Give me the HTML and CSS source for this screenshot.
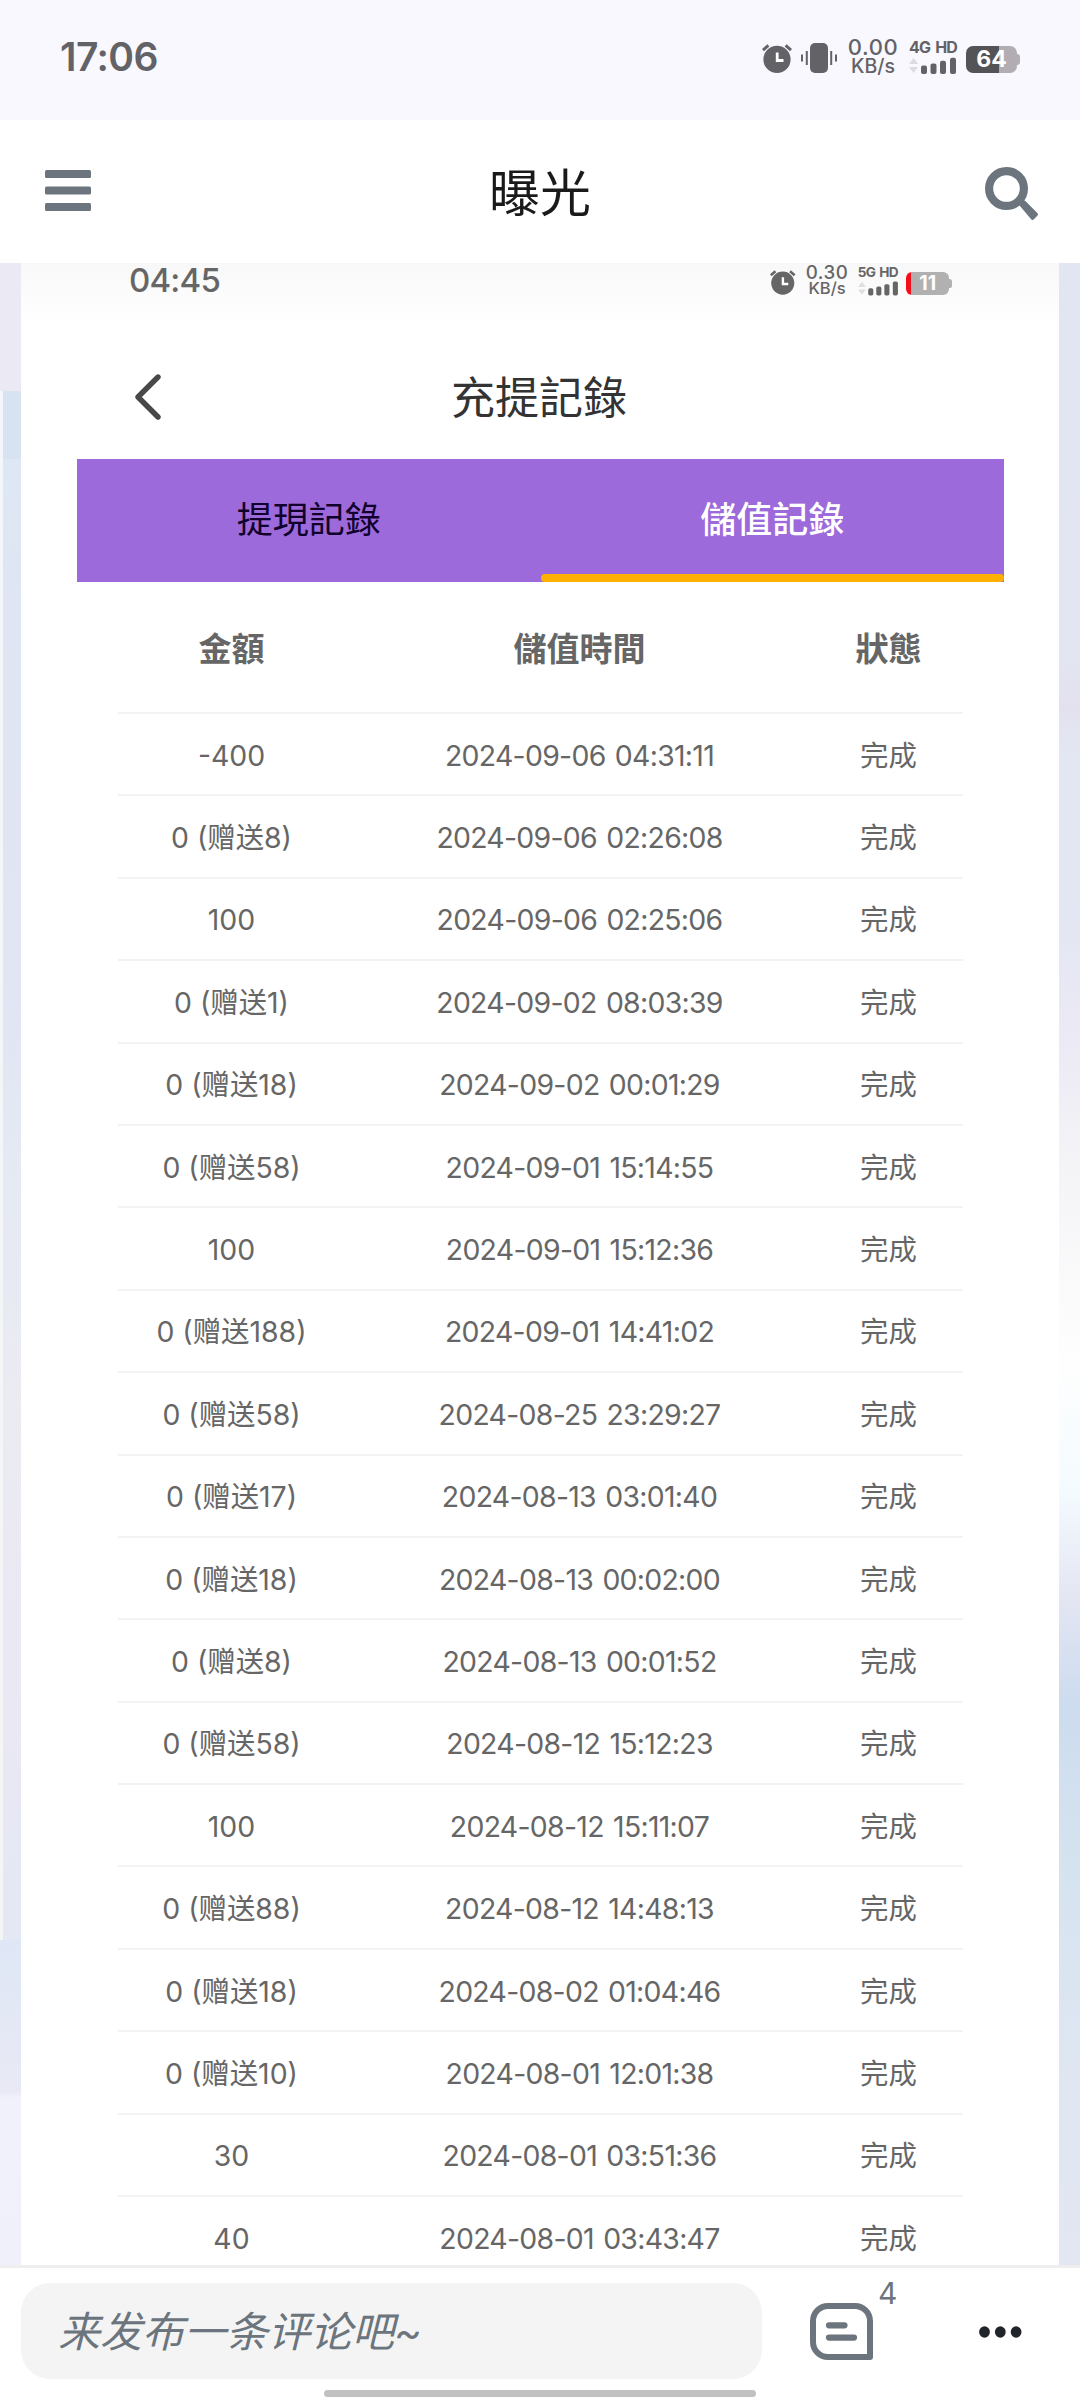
FILE: index.html
```
<!DOCTYPE html>
<html lang="zh-CN">
<head>
    <meta charset="UTF-8">
    <meta name="viewport" content="width=device-width, initial-scale=1.0">
    <title>曝光</title>
    <link rel="stylesheet" href="styles.css">
</head>
<body>
    <div class="status-bar">
        <div class="clock">17:06</div>
        <div class="status-icons">
            <svg class="alarm" viewBox="0 0 30 29"><circle cx="15" cy="15.4" r="13.6" fill="currentColor"/><path d="M1 6.2L6.4 1.4M29 6.2L23.6 1.4" stroke="currentColor" stroke-width="3"/><path d="M15.2 8.5v8h6.3" fill="none" stroke="#fff" stroke-width="2.8"/></svg>
            <svg class="vibrate" viewBox="0 0 36 30"><rect x="9" width="18" height="30" rx="5" fill="currentColor"/><path d="M1 11.5v7M5.8 8v14M30.2 8v14M35 11.5v7" stroke="currentColor" stroke-width="2"/></svg>
            <div class="speed"><span>0.00</span><span class="unit">KB/s</span></div>
            <div class="signal">
                <span>4G HD</span>
                <svg viewBox="0 0 47 17"><path d="M0 7l4.6-6 4.6 6zM0 10h9.2l-4.6 6z" fill="#dddce2"/><g fill="currentColor"><rect x="12" y="8.5" width="6" height="8.5" rx="2"/><rect x="21.5" y="6.5" width="6" height="10.5" rx="2"/><rect x="31" y="3.7" width="6" height="13.3" rx="2"/><rect x="41" y="0.7" width="6" height="16.3" rx="2"/></g></svg>
            </div>
            <div class="battery"><span>64</span></div>
        </div>
    </div>

    <header class="header">
        <svg class="menu-btn" viewBox="0 0 46 41"><g fill="#6c757d"><rect width="46" height="8" rx="1.5"/><rect y="16.5" width="46" height="8" rx="1.5"/><rect y="33" width="46" height="8" rx="1.5"/></g></svg>
        <h1>曝光</h1>
        <svg class="search-btn" viewBox="0 0 53 53"><circle cx="21.5" cy="21.5" r="17.4" fill="none" stroke="#6c757d" stroke-width="8.2"/><path d="M34.6 38.6q-.6-2.600 1.600-4.400 2.100-1.800 4.200-.2L52.300 46q1.400 1.400 0 2.800l-3.400 3.400q-1.400 1.400-2.800 0z" fill="#6c757d"/></svg>
    </header>

    <main class="content">
        <div class="card">
            <div class="status-bar inner">
                <div class="clock">04:45</div>
                <div class="status-icons">
                    <svg class="alarm" viewBox="0 0 30 29"><circle cx="15" cy="15.4" r="13.6" fill="currentColor"/><path d="M1 6.2L6.4 1.4M29 6.2L23.6 1.4" stroke="currentColor" stroke-width="3"/><path d="M15.2 8.5v8h6.3" fill="none" stroke="#fff" stroke-width="2.8"/></svg>
                    <div class="speed"><span>0.30</span><span class="unit">KB/s</span></div>
                    <div class="signal">
                        <span>5G HD</span>
                        <svg viewBox="0 0 47 17"><path d="M0 7l4.6-6 4.6 6zM0 10h9.2l-4.6 6z" fill="#dfdfdf"/><g fill="currentColor"><rect x="12" y="8.5" width="6" height="8.5" rx="2"/><rect x="21.5" y="6.5" width="6" height="10.5" rx="2"/><rect x="31" y="3.7" width="6" height="13.3" rx="2"/><rect x="41" y="0.7" width="6" height="16.3" rx="2"/></g></svg>
                    </div>
                    <div class="battery low"><span>11</span></div>
                </div>
            </div>

            <div class="page-title">
                <svg class="back" viewBox="0 0 27 46"><path d="M24 3L4 23l20 20" fill="none" stroke="#484848" stroke-width="5.4" stroke-linecap="round" stroke-linejoin="round"/></svg>
                <h2>充提記錄</h2>
            </div>

            <div class="tabs">
                <div class="tab">提現記錄</div>
                <div class="tab active">儲值記錄</div>
            </div>

            <div class="records">
                <div class="row head"><span>金額</span><span>儲值時間</span><span>狀態</span></div>
                <div class="row"><span>-400</span><span class="time">2024-09-06 04:31:11</span><span>完成</span></div>
                <div class="row"><span>0 (赠送8)</span><span class="time">2024-09-06 02:26:08</span><span>完成</span></div>
                <div class="row"><span>100</span><span class="time">2024-09-06 02:25:06</span><span>完成</span></div>
                <div class="row"><span>0 (赠送1)</span><span class="time">2024-09-02 08:03:39</span><span>完成</span></div>
                <div class="row"><span>0 (赠送18)</span><span class="time">2024-09-02 00:01:29</span><span>完成</span></div>
                <div class="row"><span>0 (赠送58)</span><span class="time">2024-09-01 15:14:55</span><span>完成</span></div>
                <div class="row"><span>100</span><span class="time">2024-09-01 15:12:36</span><span>完成</span></div>
                <div class="row"><span>0 (赠送188)</span><span class="time">2024-09-01 14:41:02</span><span>完成</span></div>
                <div class="row"><span>0 (赠送58)</span><span class="time">2024-08-25 23:29:27</span><span>完成</span></div>
                <div class="row"><span>0 (赠送17)</span><span class="time">2024-08-13 03:01:40</span><span>完成</span></div>
                <div class="row"><span>0 (赠送18)</span><span class="time">2024-08-13 00:02:00</span><span>完成</span></div>
                <div class="row"><span>0 (赠送8)</span><span class="time">2024-08-13 00:01:52</span><span>完成</span></div>
                <div class="row"><span>0 (赠送58)</span><span class="time">2024-08-12 15:12:23</span><span>完成</span></div>
                <div class="row"><span>100</span><span class="time">2024-08-12 15:11:07</span><span>完成</span></div>
                <div class="row"><span>0 (赠送88)</span><span class="time">2024-08-12 14:48:13</span><span>完成</span></div>
                <div class="row"><span>0 (赠送18)</span><span class="time">2024-08-02 01:04:46</span><span>完成</span></div>
                <div class="row"><span>0 (赠送10)</span><span class="time">2024-08-01 12:01:38</span><span>完成</span></div>
                <div class="row"><span>30</span><span class="time">2024-08-01 03:51:36</span><span>完成</span></div>
                <div class="row"><span>40</span><span class="time">2024-08-01 03:43:47</span><span>完成</span></div>
            </div>
        </div>
    </main>

    <footer class="footer">
        <div class="comment-input">来发布一条评论吧~</div>
        <div class="comment-btn">
            <svg viewBox="0 0 63 57"><path d="M18 3h27a15 15 0 0 1 15 15v36H18A15 15 0 0 1 3 39V18A15 15 0 0 1 18 3z" fill="none" stroke="#6c757d" stroke-width="6" stroke-linejoin="round"/><path d="M19 22.300h15.500M19 34.600h25" stroke="#6c757d" stroke-width="6.200" stroke-linecap="round"/></svg>
            <span class="count">4</span>
        </div>
        <svg class="more" viewBox="0 0 43 12"><g fill="#212529"><ellipse cx="5.500" cy="6" rx="5.400" ry="5.700"/><ellipse cx="21.300" cy="6" rx="5.400" ry="5.700"/><ellipse cx="37.100" cy="6" rx="5.400" ry="5.700"/></g></svg>
        <div class="home-bar"></div>
    </footer>
</body>
</html>
```
FILE: styles.css
```
* {
    margin: 0;
    padding: 0;
    box-sizing: border-box;
}

body {
    width: 1080px;
    height: 2400px;
    display: flex;
    flex-direction: column;
    background: #fff;
    font-family: Inter, "Noto Sans CJK SC", sans-serif;
    overflow: hidden;
}

svg {
    display: block;
    flex: none;
}

/* 状态栏，尺寸用em，内层按比例缩小 */
.status-bar {
    height: 120px;
    flex: none;
    display: flex;
    justify-content: space-between;
    padding: 0 60px 0 60px;
    background: #f9f8ff;
    color: #636266;
    font-size: 10px;
}

.clock {
    font-size: 3.9em;
    line-height: 113px;
    font-weight: 600;
    letter-spacing: -0.6px;
}

.status-icons {
    display: flex;
    align-items: flex-start;
    padding-top: 3.8em;
}

.alarm {
    width: 3em;
    height: 2.9em;
    margin: 0.6em 0.9em 0 0;
}

.vibrate {
    width: 3.6em;
    height: 3em;
    margin: 0.5em 1.1em 0 0;
}

.speed {
    width: 5em;
    display: flex;
    flex-direction: column;
    align-items: center;
    font-weight: 500;
    white-space: nowrap;
}

.speed span {
    font-size: 2.2em;
    line-height: 0.82em;
    letter-spacing: 0.03em;
}

.speed .unit {
    font-size: 1.95em;
    line-height: 1.05em;
    letter-spacing: 0;
}

.signal {
    width: 4.8em;
    margin-left: 1.1em;
    font-weight: 700;
    white-space: nowrap;
}

.signal span {
    display: block;
    font-size: 1.6em;
    line-height: 1.15em;
    letter-spacing: -0.05em;
    word-spacing: 0.12em;
}

.signal svg {
    width: 4.7em;
    height: 1.7em;
    margin-top: 0.1em;
}

.battery {
    position: relative;
    width: 5.1em;
    height: 2.7em;
    margin: 0.8em 0.3em 0 0.9em;
    border-radius: 0.7em;
    background: linear-gradient(90deg, #545356 64%, #b1adb3 64%);
    color: #fff;
    font-weight: 700;
    text-align: center;
}

.battery span {
    font-size: 2.3em;
    line-height: 1.2em;
}

.battery::after {
    content: "";
    position: absolute;
    right: -0.3em;
    top: 0.8em;
    width: 0.3em;
    height: 1.1em;
    border-radius: 0 0.3em 0.3em 0;
    background: #b1adb3;
}

.battery.low {
    background: linear-gradient(90deg, #f3101c 11%, #b1b1b1 11%);
}

.battery.low::after {
    background: #b1b1b1;
}

.header {
    height: 143px;
    flex: none;
    display: flex;
    align-items: center;
    justify-content: space-between;
    padding: 0 42px 0 45px;
}

.header h1 {
    font-size: 51px;
    font-weight: 400;
    line-height: 60px;
    padding: 5px 3px 0 0;
    color: #1a1a1a;
}

.menu-btn {
    width: 46px;
    height: 41px;
    margin-top: -2px;
}

.search-btn {
    width: 53px;
    height: 53px;
    margin-left: -7px;
    margin-top: 4px;
}

/* 两侧露出的背景图 */
.content {
    height: 2002px;
    flex: none;
    padding: 0 21px;
    overflow: hidden;
    background:
        linear-gradient(#f3f6fb, #f5f5f5) 0 128px / 3px 1549px no-repeat,
        linear-gradient(#ebe9f4 0, #ebe9f4 128px, #d8e3f1 128px, #d8e3f1 196px, #dee8f4 196px, #dfe5f2 330px, #e2e5f3 740px, #e3e9f3 850px, #ebebf2 1140px, #eae8f3 1440px, #e3e8f3 1677px, #dfe7f6 1677px, #e8e9f4 1828px, #f0f1fb 1835px, #f0f0fb 2002px) 0 0 / 21px 100% no-repeat,
        linear-gradient(#e1e6f2 0, #e3e6f2 380px, #e3e1ef 444px, #e2e7f2 490px, #e2e7f3 640px, #ebe9f4 770px, #f4f4f7 900px, #fefefe 1098px, #f4fbfe 1229px, #e4e6f3 1333px, #cddcee 1438px, #d6e4ef 1620px, #dfe6f2 1817px, #e3e7f2 2002px) 100% 0 / 21px 100% no-repeat;
}

.card {
    background: linear-gradient(#f8f8f8, #fff 60px);
    height: 2002px;
    overflow: hidden;
}

.status-bar.inner {
    height: 94px;
    padding: 0 107px 0 108px;
    background: none;
    color: #666;
    font-size: 8.5px;
}

.inner .clock {
    font-size: 33px;
    line-height: 34px;
    font-weight: 500;
    letter-spacing: -0.8px;
}

.inner .status-icons {
    padding-top: 2px;
}

.inner .alarm {
    margin-right: 1.2em;
}

.page-title {
    height: 102px;
    display: flex;
    align-items: center;
    padding: 0 113px;
    padding-bottom: 22px;
}

.page-title h2 {
    flex: 1;
    margin-right: 29px;
    padding-top: 2px;
    font-family: Inter, "Noto Sans CJK TC", sans-serif;
    font-size: 44px;
    font-weight: 400;
    line-height: 60px;
    text-align: center;
    color: #333;
}

.back {
    width: 27px;
    height: 46px;
}

.tabs {
    display: flex;
    height: 123px;
    margin: 0 55px 0 56px;
    background: #9c6ada;
    font-family: Inter, "Noto Sans CJK TC", sans-serif;
}

.tab {
    flex: 1;
    position: relative;
    font-size: 36px;
    line-height: 122px;
    text-align: center;
    color: #10002b;
}

.tab.active {
    color: #fff;
    font-weight: 500;
}

.tab.active::after {
    content: "";
    position: absolute;
    left: 0;
    right: 0;
    bottom: 0;
    height: 8px;
    border-radius: 4px;
    background: #ffb000;
}

.records {
    margin: 0 96px 0 97px;
    color: #666;
}

.row {
    display: grid;
    grid-template-columns: 227px 469px 1fr;
    align-items: center;
    height: 82.4px;
    padding-top: 3px;
    border-bottom: 2px solid #f3f3f3;
    font-size: 28.4px;
    line-height: 40px;
    text-align: center;
    white-space: nowrap;
}

.row .time {
    letter-spacing: -0.7px;
    word-spacing: 2px;
}

.row.head {
    height: 132px;
    font-family: Inter, "Noto Sans CJK TC", sans-serif;
    font-size: 33px;
    font-weight: 700;
}

.footer {
    position: relative;
    height: 135px;
    flex: none;
    display: flex;
    align-items: flex-start;
    padding: 15px 42px 0 21px;
    border-top: 3px solid #eee;
}

.comment-input {
    width: 741px;
    height: 96px;
    padding-left: 37px;
    border-radius: 29px;
    background: #f4f4f4;
    color: #6c757d;
    font-size: 42px;
    font-style: italic;
    line-height: 98px;
}

.comment-btn {
    display: flex;
    align-items: flex-start;
    margin-left: 48px;
}

.comment-btn svg {
    width: 63px;
    height: 57px;
    margin-top: 20px;
}

.count {
    margin-left: 5px;
    color: #6c757d;
    font-size: 30px;
    line-height: 20px;
}

.more {
    width: 43px;
    height: 12px;
    margin: 43px 16px 0 auto;
}

.home-bar {
    position: absolute;
    left: 324px;
    bottom: 3px;
    width: 432px;
    height: 7px;
    border-radius: 4px;
    background: #c1c1c1;
}
```
